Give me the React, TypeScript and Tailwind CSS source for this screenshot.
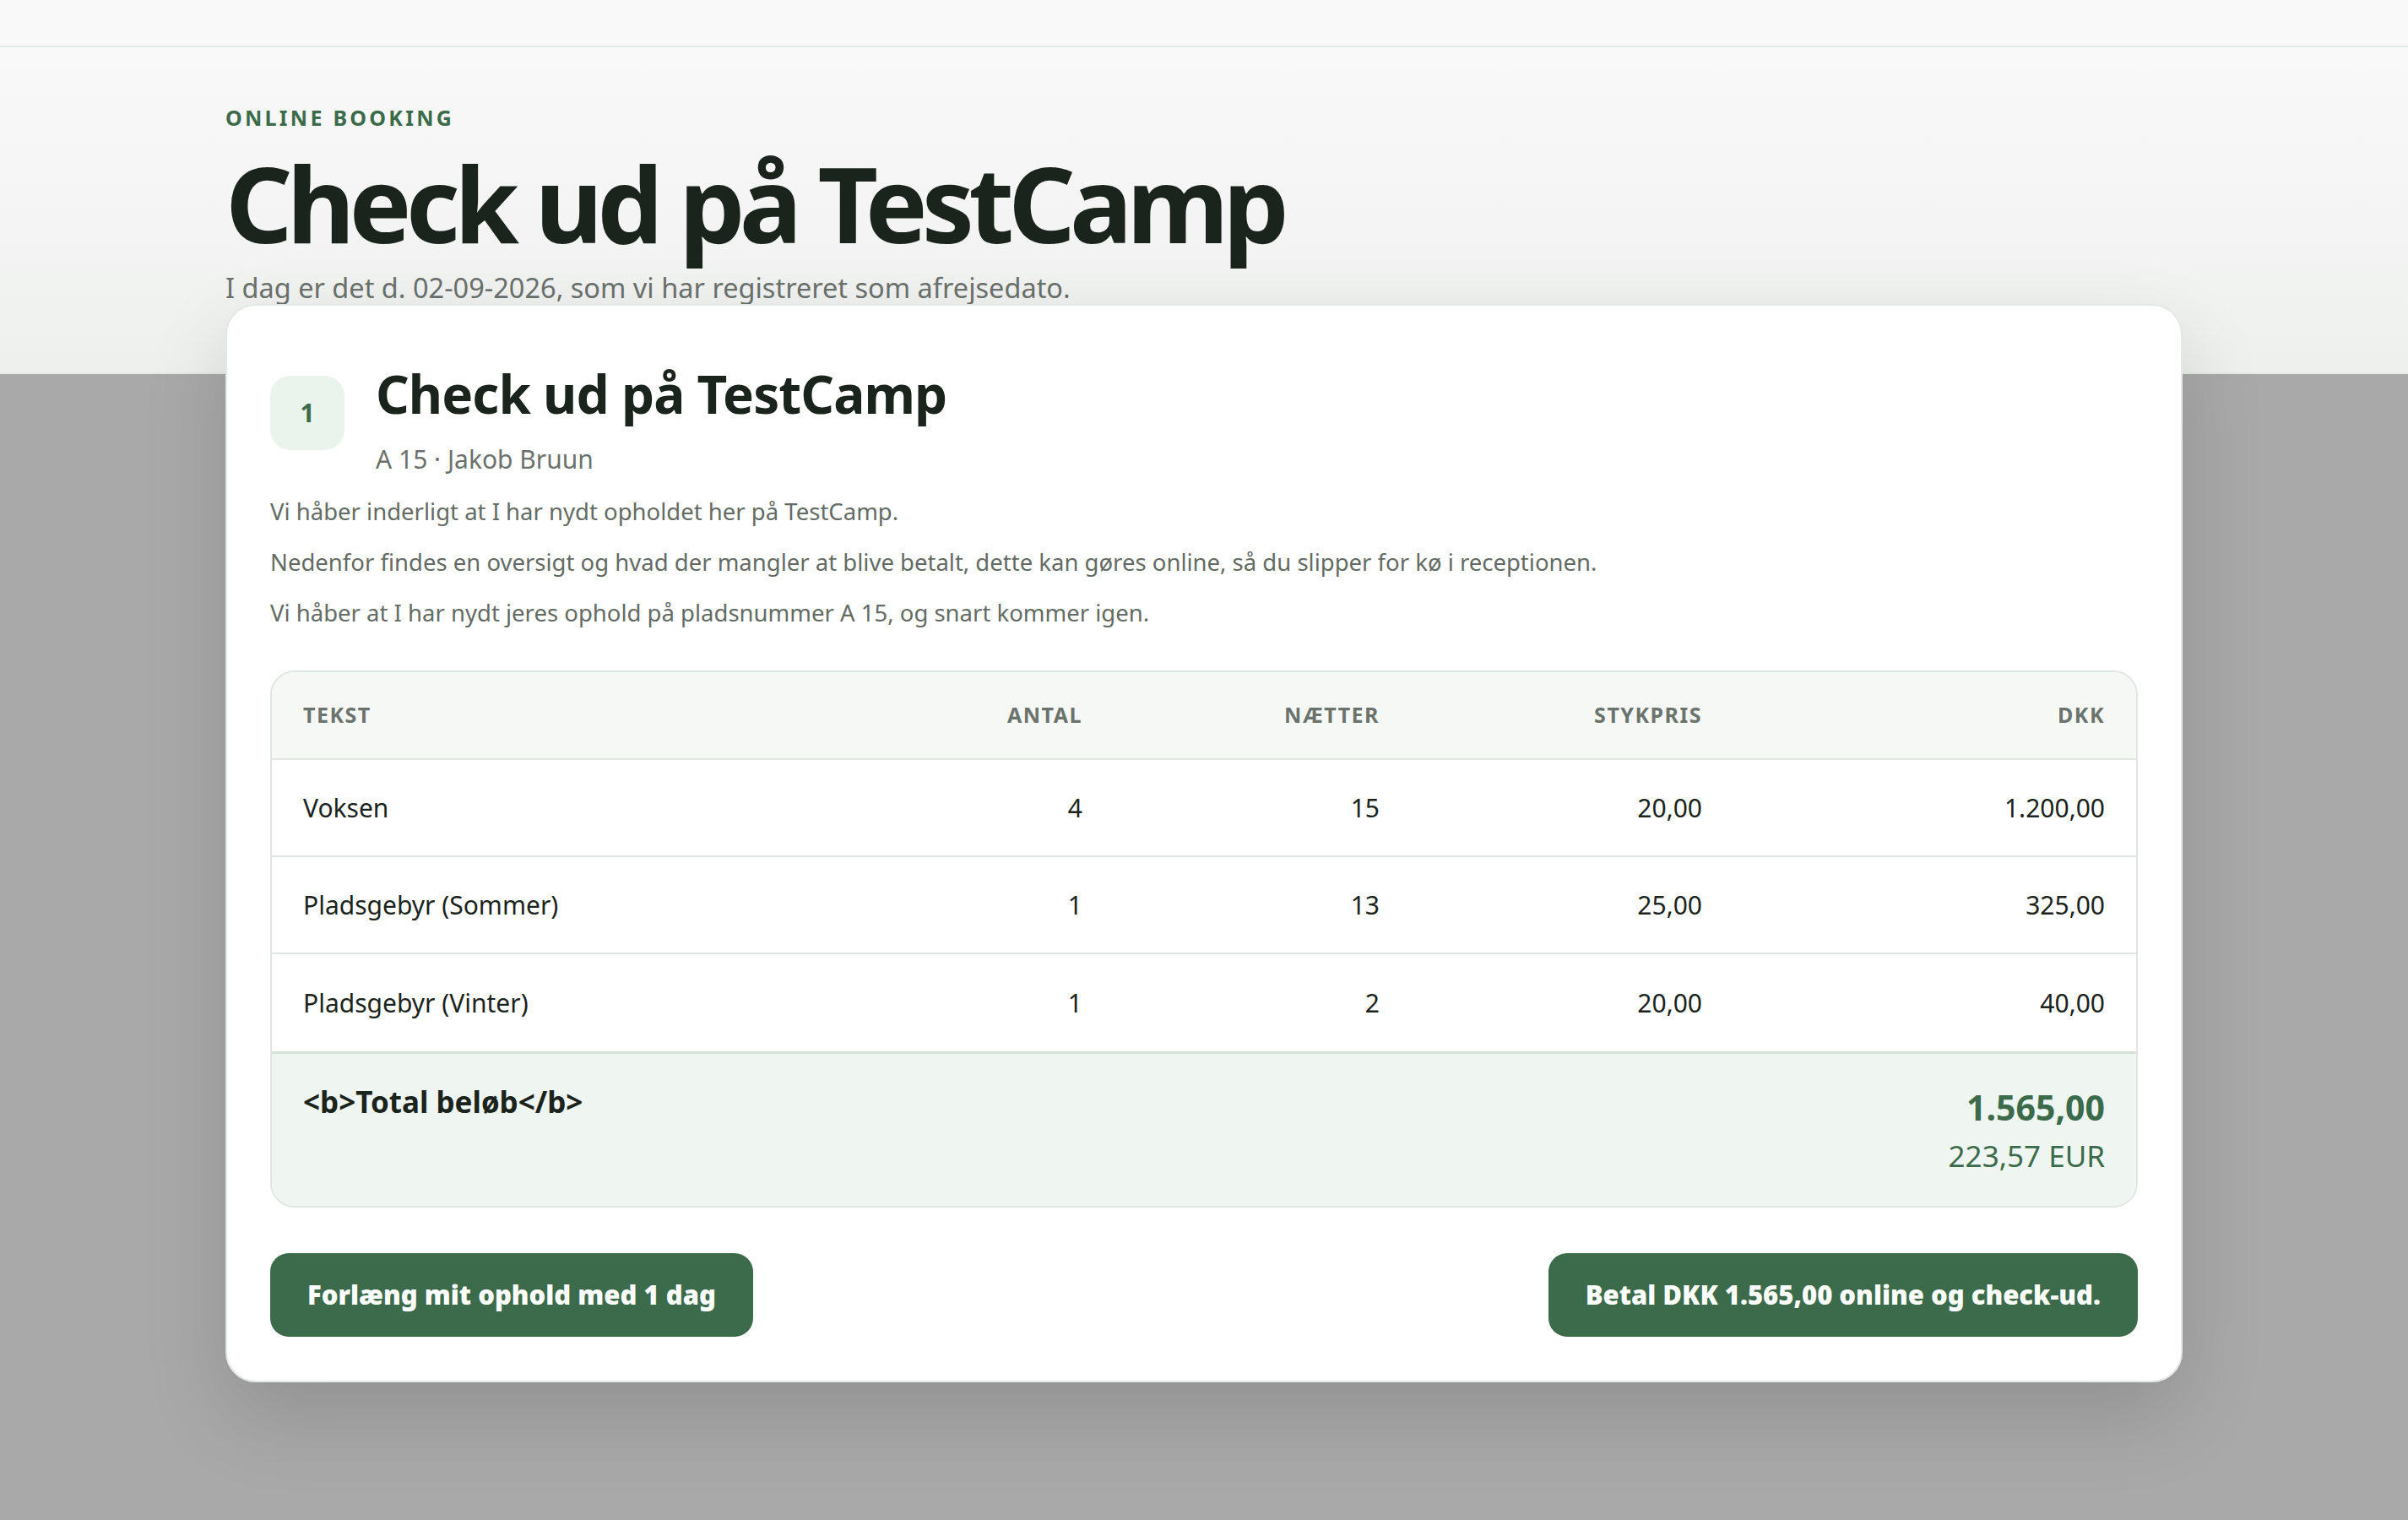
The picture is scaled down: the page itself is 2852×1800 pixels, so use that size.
const rows = [
  { text: "Voksen", antal: "4", naetter: "15", stykpris: "20,00", dkk: "1.200,00" },
  { text: "Pladsgebyr (Sommer)", antal: "1", naetter: "13", stykpris: "25,00", dkk: "325,00" },
  { text: "Pladsgebyr (Vinter)", antal: "1", naetter: "2", stykpris: "20,00", dkk: "40,00" },
];

const cols = "grid grid-cols-[1fr_360px_352px_382px_477px] px-[37px]";

export default function App() {
  return (
    <div className="min-h-screen bg-[#a9a9a9] font-['Noto_Sans','Open_Sans',sans-serif] text-[#1b231d]">
      <div className="h-[56px] border-b-2 border-[#e1e7e2] bg-[#f8f9f8]" />

      <section className="border-b-2 border-[#e6e9e6] bg-gradient-to-b from-[#f9f9f9] to-[#eef0ee]">
        <div className="mx-auto w-[2318px] pt-[68px] pb-[75px]">
          <p className="text-[25px] font-bold uppercase leading-[31px] tracking-[0.13em] text-[#3b6b4a]">
            Online booking
          </p>
          <h1 className="mt-[23px] text-[124px] font-bold leading-none tracking-[-0.055em] text-[#1b231d]">
            Check ud på TestCamp
          </h1>
          <p className="mt-[15px] text-[32.5px] leading-[1.5] text-[#6b716c]">
            I dag er det d. 02-09-2026, som vi har registreret som afrejsedato.
          </p>
        </div>
      </section>

      <main className="mx-auto -mt-[83px] w-[2318px] pb-[160px]">
        <div className="relative rounded-[36px] border-2 border-[#e4e9e5] bg-white px-[51px] pt-[67px] pb-[52px] shadow-[0_40px_100px_rgba(0,0,0,0.14)]">
          <div className="flex items-start gap-[37px]">
            <div className="mt-[16px] flex h-[88px] w-[88px] shrink-0 items-center justify-center rounded-[24px] bg-[#eaf3ec] text-[30px] font-bold text-[#3b6b4a]">
              1
            </div>
            <div>
              <h2 className="text-[62px] font-bold leading-[1.2] tracking-[-0.015em]">Check ud på TestCamp</h2>
              <p className="mt-[18px] text-[30px] leading-[1.5] text-[#6b716c]">A 15 · Jakob Bruun</p>
            </div>
          </div>

          <div className="mt-[19px] flex flex-col gap-[18px] text-[27.5px] leading-[42px] text-[#646b65]">
            <p>Vi håber inderligt at I har nydt opholdet her på TestCamp.</p>
            <p>
              Nedenfor findes en oversigt og hvad der mangler at blive betalt, dette kan gøres online, så du slipper
              for kø i receptionen.
            </p>
            <p>Vi håber at I har nydt jeres ophold på pladsnummer A 15, og snart kommer igen.</p>
          </div>

          <div className="mt-[47px] overflow-hidden rounded-[29px] border-2 border-[#e0e6e1]">
            <div
              className={`${cols} h-[104px] items-center border-b-2 border-[#e0e6e1] bg-[#f6f8f6] text-[25px] font-bold uppercase tracking-[0.06em] text-[#6b736d]`}
            >
              <span>Tekst</span>
              <span className="text-right">Antal</span>
              <span className="text-right">Nætter</span>
              <span className="text-right">Stykpris</span>
              <span className="text-right">DKK</span>
            </div>

            {rows.map((row, i) => (
              <div
                key={row.text}
                className={`${cols} h-[115px] items-center text-[30px] ${
                  i < rows.length - 1 ? "border-b-2 border-[#e0e6e1]" : ""
                }`}
              >
                <span>{row.text}</span>
                <span className="text-right">{row.antal}</span>
                <span className="text-right">{row.naetter}</span>
                <span className="text-right">{row.stykpris}</span>
                <span className="text-right">{row.dkk}</span>
              </div>
            ))}

            <div className="flex items-start justify-between border-t-[3px] border-[#d5e2d8] bg-[#eff5f1] px-[37px] py-[33px]">
              <span className="text-[35px] font-bold leading-[1.35]">&lt;b&gt;Total beløb&lt;/b&gt;</span>
              <div className="text-right text-[#3b6b4a]">
                <div className="text-[41px] font-bold leading-[1.5]">1.565,00</div>
                <div className="text-[35px] leading-[1.5]">223,57 EUR</div>
              </div>
            </div>
          </div>

          <div className="mt-[54px] flex items-center justify-between">
            <button className="h-[99px] rounded-[22px] bg-[#3b6b4a] px-[44px] text-[31px] font-black text-white">
              Forlæng mit ophold med 1 dag
            </button>
            <button className="h-[99px] rounded-[22px] bg-[#3b6b4a] px-[44px] text-[31px] font-black text-white">
              Betal DKK 1.565,00 online og check-ud.
            </button>
          </div>
        </div>
      </main>
    </div>
  );
}
